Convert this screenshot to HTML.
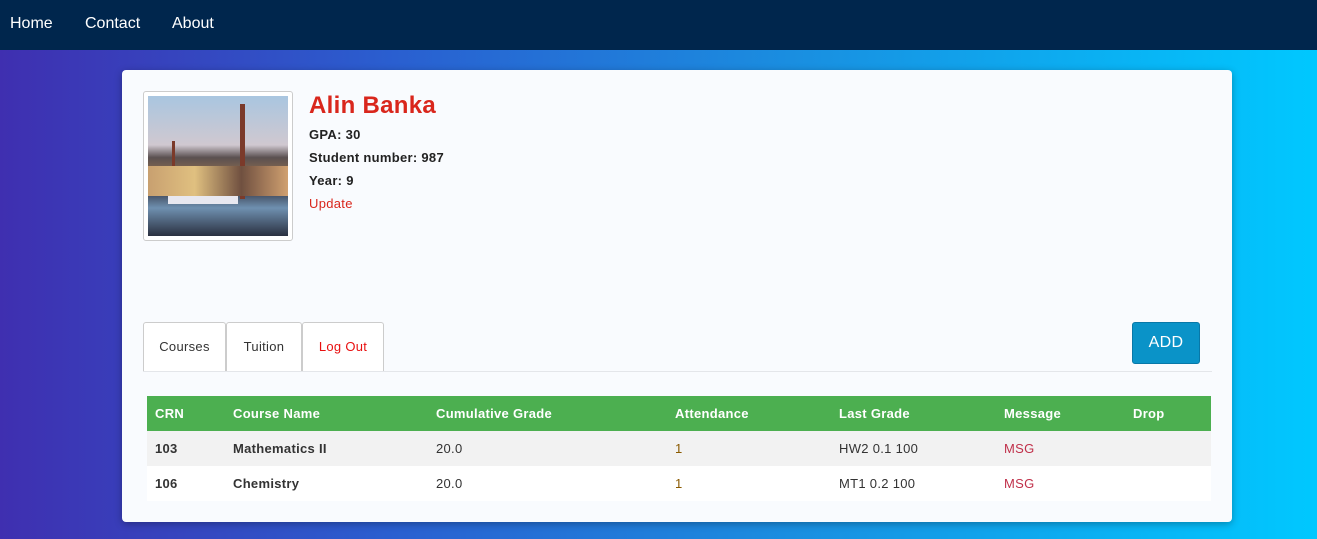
<!DOCTYPE html>
<html><head><meta charset="utf-8"><style>
*{box-sizing:border-box;margin:0;padding:0}
body{width:1317px;height:539px;overflow:hidden;font-family:"Liberation Sans",sans-serif;background:linear-gradient(90deg,#3f2fb0 0%,#2a5fd0 30%,#1a8ee0 60%,#00c8ff 100%);position:relative}
.nav{position:absolute;left:0;top:0;width:1317px;height:50px;background:#00264d;color:#fff;font-size:16px}
.nav span{position:absolute;top:15px}
.card{position:absolute;left:122px;top:70px;width:1110px;height:452px;background:#f9fbfe;border-radius:4px;box-shadow:0 2px 8px rgba(0,0,0,.3)}
.card div,.card table{letter-spacing:0.3px}
.img{position:absolute;left:21px;top:21px;width:150px;height:150px;border:1px solid #ccc;border-radius:3px;background:#fff;padding:4px}
.pic{width:140px;height:140px;background:linear-gradient(180deg,#a9c6e0 0%,#d0c8d0 35%,#5a5050 44%,#8a6a50 55%,#3a4050 68%,#6f90b0 80%,#2a3040 100%);position:relative;overflow:hidden}
.pic i{position:absolute;background:#7b3a2a}
.name{position:absolute;left:187px;top:22px;color:#d9261c;font-size:24px;font-weight:bold}
.info{position:absolute;left:187px;font-size:13px;font-weight:bold;color:#222}
.upd{position:absolute;left:187px;top:126px;font-size:13px;color:#d9261c}
.tab{position:absolute;top:252px;height:50px;border:1px solid #ccc;border-bottom:none;border-radius:3px 3px 0 0;background:#fff;font-size:13px;color:#333;text-align:center;line-height:48px}
.line{position:absolute;left:21px;top:301px;width:1069px;height:1px;background:#e4e6ea}
.add{position:absolute;left:1010px;top:252px;width:68px;height:42px;background:#0a93c8;border:1px solid #0878a8;border-radius:3px;color:#fff;font-size:16px;text-align:center;line-height:40px}
table{position:absolute;left:25px;top:326px;width:1064px;border-collapse:collapse;font-size:13px}
th{background:#4caf50;color:#fff;text-align:left;height:35px;padding-left:8px;font-weight:bold}
td{height:35px;padding-left:8px;color:#333}
tr.a td{background:#f2f2f2}tr.b td{background:#fff}
.o{color:#8a5a00}.m{color:#c0304a}
</style></head><body>
<div class="nav"><span style="left:10px">Home</span><span style="left:85px">Contact</span><span style="left:172px">About</span></div>
<div class="card">
<div class="img"><div class="pic"><i style="left:92px;top:8px;width:5px;height:95px"></i><i style="left:24px;top:45px;width:3px;height:50px"></i><div style="position:absolute;left:0;top:70px;width:140px;height:30px;background:linear-gradient(90deg,#c8a070,#e0c080,#705040,#d0a070)"></div><div style="position:absolute;left:20px;top:100px;width:70px;height:8px;background:#e8e8f0"></div></div></div>
<div class="name">Alin Banka</div>
<div class="info" style="top:57px">GPA: 30</div>
<div class="info" style="top:80px">Student number: 987</div>
<div class="info" style="top:103px">Year: 9</div>
<div class="upd">Update</div>
<div class="tab" style="left:21px;width:83px">Courses</div>
<div class="tab" style="left:104px;width:76px">Tuition</div>
<div class="tab" style="left:180px;width:82px;color:#e81010">Log Out</div>
<div class="line"></div>
<div class="add">ADD</div>
<table>
<tr><th style="width:78px">CRN</th><th style="width:203px">Course Name</th><th style="width:239px">Cumulative Grade</th><th style="width:164px">Attendance</th><th style="width:165px">Last Grade</th><th style="width:129px">Message</th><th>Drop</th></tr>
<tr class="a"><td><b>103</b></td><td><b>Mathematics II</b></td><td>20.0</td><td class="o">1</td><td>HW2 0.1 100</td><td class="m">MSG</td><td></td></tr>
<tr class="b"><td><b>106</b></td><td><b>Chemistry</b></td><td>20.0</td><td class="o">1</td><td>MT1 0.2 100</td><td class="m">MSG</td><td></td></tr>
</table>
</div>
</body></html>
